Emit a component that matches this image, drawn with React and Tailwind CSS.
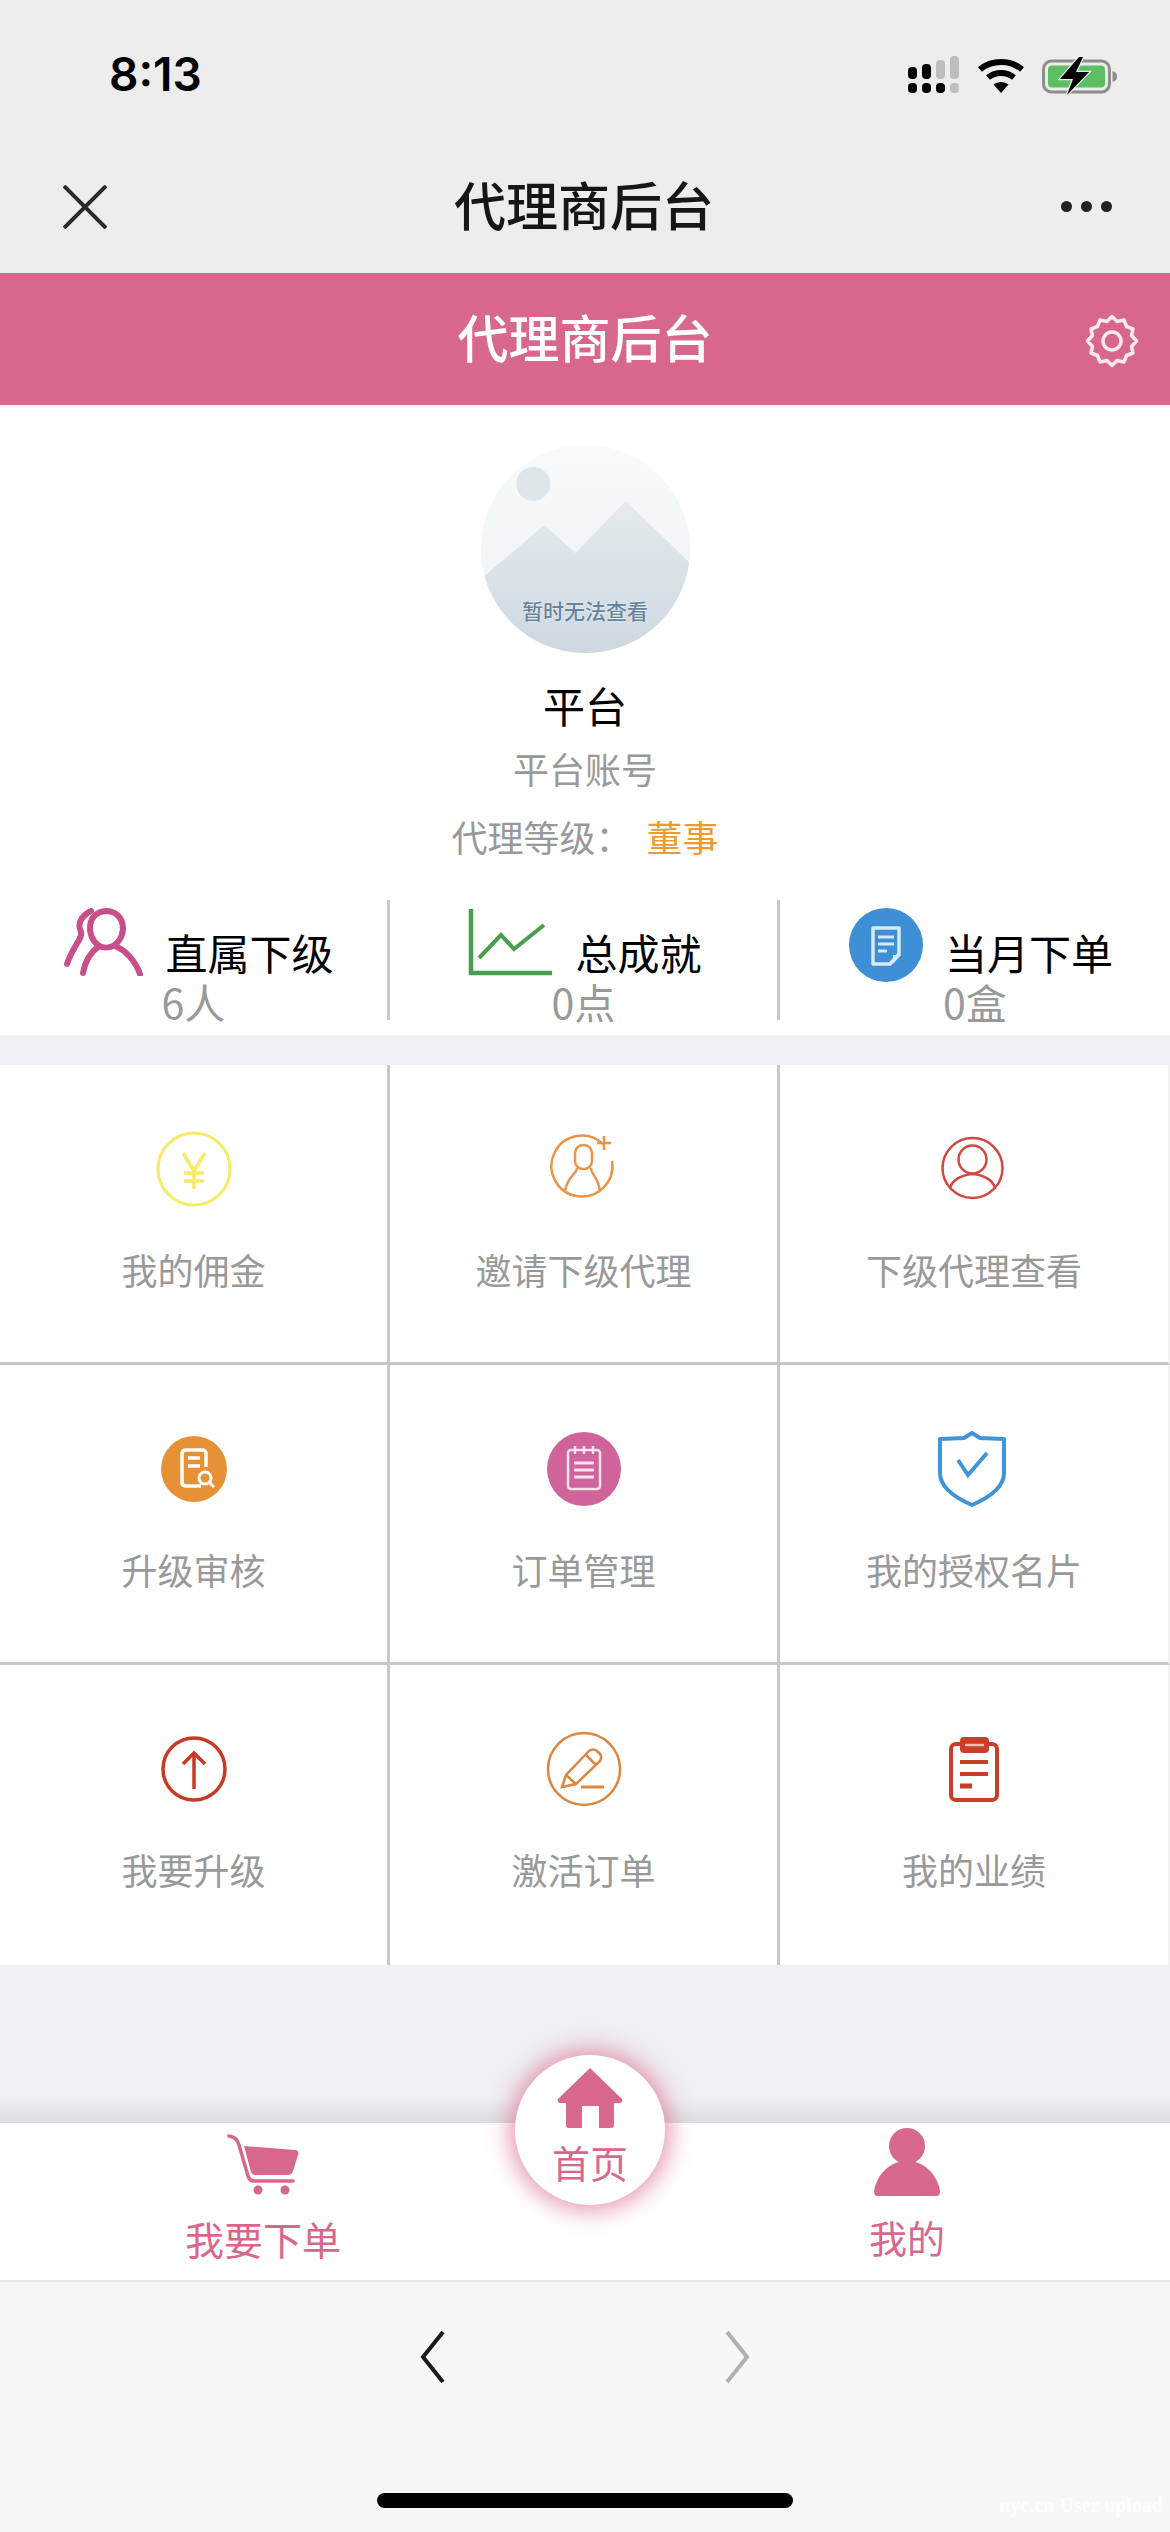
const cjk = "font-['Noto_Sans_CJK_SC','Noto_Sans',sans-serif]";

function Signal() {
  return (
    <svg width="52" height="38" viewBox="0 0 52 38">
      <rect x="0" y="11" width="9" height="12" rx="4" fill="#000" />
      <rect x="14" y="8" width="9" height="15" rx="4" fill="#000" />
      <rect x="28" y="4" width="9" height="19" rx="4" fill="#bdbdbd" />
      <rect x="42" y="0" width="9" height="23" rx="4" fill="#bdbdbd" />
      <rect x="0" y="27" width="9" height="10" rx="4" fill="#000" />
      <rect x="14" y="27" width="9" height="10" rx="4" fill="#000" />
      <rect x="28" y="27" width="9" height="10" rx="4" fill="#000" />
      <rect x="42" y="27" width="9" height="10" rx="4" fill="#bdbdbd" />
    </svg>
  );
}

function Wifi() {
  return (
    <svg width="48" height="38" viewBox="0 0 48 38">
      <path d="M3 13.5C14.5 3.5 33.5 3.5 45 13.5" fill="none" stroke="#000" strokeWidth="6" />
      <path d="M11 21.5C18.5 15.5 29.5 15.5 37 21.5" fill="none" stroke="#000" strokeWidth="6" />
      <path d="M16.5 28.5C21 25 27 25 31.5 28.5L24 37Z" fill="#000" />
    </svg>
  );
}

function Battery() {
  return (
    <svg width="76" height="40" viewBox="0 0 76 40">
      <rect x="1.5" y="5" width="66" height="31" rx="8" fill="none" stroke="#8e8e8e" strokeWidth="3" />
      <rect x="6" y="9.5" width="57" height="22" rx="4" fill="#5dbf63" />
      <path d="M70.5 15C74 16 75 18 75 20.5C75 23 74 25 70.5 26Z" fill="#8e8e8e" />
      <path d="M37 1L18 23H31L25 39L47 16H34L41 1Z" fill="#000" stroke="#ededed" strokeWidth="2.5" paintOrder="stroke" />
    </svg>
  );
}

function Gear() {
  return (
    <svg width="54" height="54" viewBox="0 0 54 54" fill="none" stroke="#fff" strokeOpacity="0.85" strokeWidth="3.5" strokeLinejoin="round">
      <path d="M27 2.5L32 7.5L39 6L41.5 12.5L48 15L46.5 21.5L51.5 27L46.5 32.5L48 39L41.5 41.5L39 48L32 46.5L27 51.5L22 46.5L15 48L12.5 41.5L6 39L7.5 32.5L2.5 27L7.5 21.5L6 15L12.5 12.5L15 6L22 7.5Z" />
      <circle cx="27" cy="27" r="9" />
    </svg>
  );
}

function Avatar() {
  return (
    <div className="relative w-[209px] h-[208px] rounded-full overflow-hidden">
      <svg width="209" height="208" viewBox="0 0 208 208" preserveAspectRatio="none">
        <defs>
          <linearGradient id="sky" x1="0" y1="0" x2="0" y2="1">
            <stop offset="0" stopColor="#f8fafb" />
            <stop offset="1" stopColor="#edf2f5" />
          </linearGradient>
          <linearGradient id="mt" x1="0" y1="0" x2="0" y2="1">
            <stop offset="0" stopColor="#e5ebee" />
            <stop offset="1" stopColor="#cdd8df" />
          </linearGradient>
        </defs>
        <rect width="208" height="208" fill="url(#sky)" />
        <circle cx="52" cy="39" r="17" fill="#dfe6ea" />
        <path d="M0 134L63 80L94 108L144 56L208 118V208H0Z" fill="url(#mt)" />
      </svg>
      <div className="absolute left-0 right-0 top-[153px] text-center text-[21px] leading-[24px] font-medium text-[#64849f] [text-shadow:0_0_2px_#fff]">暂时无法查看</div>
    </div>
  );
}

function PeopleIcon() {
  return (
    <svg width="80" height="68" viewBox="0 0 80 68" fill="none" stroke="#c94f8a" strokeWidth="6" strokeLinecap="round" className="shrink-0">
      <path d="M28 3C18 8 14 16 18 24C20 30 10 38 4 56" />
      <path d="M36 38C22 28 24 4 43 3C62 3 66 28 50 38C46 40 40 40 36 38" />
      <path d="M36 38C28 44 22 52 20 65" />
      <path d="M52 38C62 42 72 52 77 66" />
    </svg>
  );
}

function ChartIcon() {
  return (
    <svg width="85" height="68" viewBox="0 0 85 68" fill="none" stroke="#4a9e50" className="shrink-0">
      <path d="M3 1V65H84" strokeWidth="4.5" />
      <path d="M11 50L33 27L46 41L76 17" strokeWidth="4" />
    </svg>
  );
}

function DocCircleIcon() {
  return (
    <svg width="74" height="74" viewBox="0 0 74 74" fill="none" className="shrink-0">
      <circle cx="37" cy="37" r="37" fill="#3f8fd6" />
      <path d="M24 20H50V46L41 56H24Z" stroke="#d8e9f8" strokeWidth="3.5" strokeLinejoin="round" />
      <path d="M29 29H45M29 36H45M29 43H38" stroke="#d8e9f8" strokeWidth="3" />
      <path d="M44 47H52L44 56Z" fill="#d8e9f8" />
    </svg>
  );
}

function Yen() {
  return (
    <svg width="76" height="76" viewBox="0 0 76 76" fill="none" stroke="#f5ec63">
      <circle cx="38" cy="38" r="36" strokeWidth="3" />
      <path d="M27 22L38 40L49 22M38 40V58M28 42H48M28 50H48" strokeWidth="3.5" />
    </svg>
  );
}

function InviteUser() {
  return (
    <svg width="76" height="76" viewBox="0 0 76 76" fill="none" stroke="#e8954a" strokeWidth="2.5">
      <path d="M57 13A30.5 30.5 0 1 0 66 30" />
      <rect x="29" y="14" width="17" height="24" rx="8" />
      <path d="M31 37C31 43 22 44 19 60M45 37C45 43 51 44 54 60" />
      <path d="M58 5V19M51 12H65" />
    </svg>
  );
}

function UserCircle() {
  return (
    <svg width="76" height="76" viewBox="0 0 76 76" fill="none" stroke="#cf4a40" strokeWidth="2.5">
      <circle cx="36.5" cy="37" r="30" />
      <circle cx="36.5" cy="28.5" r="14" />
      <path d="M36.5 43C24 44 15 50 14 58M36.5 43C49 44 58 50 59 58" />
    </svg>
  );
}

function ReviewCircle() {
  return (
    <svg width="76" height="76" viewBox="0 0 76 76" fill="none">
      <circle cx="38" cy="38" r="33" fill="#e79137" />
      <path d="M45 55H30C27 55 26 53 26 51V23C26 20 28 19 30 19H47C49 19 50 21 50 23V36" stroke="#fff" strokeWidth="3.5" />
      <path d="M32 27H44M32 35H44" stroke="#fff" strokeWidth="3.5" />
      <circle cx="49" cy="47" r="6" stroke="#fff" strokeWidth="3" />
      <path d="M53 51L58 56" stroke="#fff" strokeWidth="3" />
    </svg>
  );
}

function OrderCircle() {
  return (
    <svg width="76" height="76" viewBox="0 0 76 76" fill="none">
      <circle cx="38" cy="38" r="37" fill="#d0639a" />
      <rect x="22" y="19" width="32" height="39" rx="3" stroke="#f9e4ef" strokeWidth="2.5" />
      <path d="M29 15V23M38 15V23M47 15V23" stroke="#f9e4ef" strokeWidth="2.5" />
      <path d="M28 32H48M28 39H48M28 46H48" stroke="#f9e4ef" strokeWidth="3" />
    </svg>
  );
}

function Shield() {
  return (
    <svg width="76" height="76" viewBox="0 0 76 76" fill="none" stroke="#3f95d8">
      <path d="M36 2L44 7L68 8V42C68 58 50 68 36 74C22 68 4 58 4 42V8L28 7Z" strokeWidth="4" strokeLinejoin="round" />
      <path d="M22 29L32 44L51 22" strokeWidth="4" />
    </svg>
  );
}

function ArrowUp() {
  return (
    <svg width="76" height="76" viewBox="0 0 76 76" fill="none" stroke="#c73a25">
      <circle cx="38" cy="38" r="31" strokeWidth="3.5" />
      <path d="M38 58V23M27 33L38 22L49 33" strokeWidth="3.5" />
    </svg>
  );
}

function PencilCircle() {
  return (
    <svg width="76" height="76" viewBox="0 0 76 76" fill="none" stroke="#dd8641" strokeWidth="2.5">
      <circle cx="38" cy="38" r="36" />
      <path d="M16 56L20 44L43 20C45 18 49 18 51 20L54 23C56 25 55 28 54 30L30 53L16 56Z" />
      <path d="M20 44L30 53M40 24L50 34" />
      <path d="M35 56H58" strokeWidth="3" />
    </svg>
  );
}

function Clip() {
  return (
    <svg width="76" height="76" viewBox="0 0 76 76" fill="none" stroke="#c73e29">
      <rect x="15" y="13" width="46" height="56" rx="5" strokeWidth="4" />
      <rect x="25" y="7" width="27" height="14" rx="3" fill="#c73e29" strokeWidth="2" />
      <path d="M29 14H48" stroke="#f3bdb2" strokeWidth="2.5" />
      <path d="M24 31H52M24 43H52" strokeWidth="4" />
      <path d="M24 55H36" strokeWidth="5" />
    </svg>
  );
}

function House() {
  return (
    <svg width="66" height="60" viewBox="0 0 66 60" fill="#d8678c">
      <path d="M33 0L65 31C66 33 65 35 62 35H57V57C57 59 56 60 54 60H42V38H25V60H12C10 60 9 59 9 57V35H4C1 35 0 33 1 31Z" />
    </svg>
  );
}

function Cart() {
  return (
    <svg width="72" height="64" viewBox="0 0 72 64" fill="none">
      <path d="M2 3C8 4 10 6 12 12L21 43C22 47 25 48 28 48H66" stroke="#d8678c" strokeWidth="3.5" strokeLinecap="round" />
      <path d="M17 13L68 17C71 17 72 19 71 22L66 38C65 41 63 42 60 42H28C26 42 25 41 24 39Z" fill="#d8678c" />
      <circle cx="31" cy="57" r="4.5" fill="#d8678c" />
      <circle cx="58" cy="57" r="4.5" fill="#d8678c" />
    </svg>
  );
}

function Person() {
  return (
    <svg width="66" height="68" viewBox="0 0 66 68" fill="#d8678c">
      <circle cx="33" cy="18" r="18" />
      <path d="M33 33C16 33 3 46 0 63C0 66 1 68 4 68H62C65 68 66 66 66 63C63 46 50 33 33 33Z" />
    </svg>
  );
}

const stats = [
  { icon: <PeopleIcon />, title: '直属下级', value: '6人', row: 'pl-[10px]' },
  { icon: <ChartIcon />, title: '总成就', value: '0点', row: 'pl-[3px]' },
  { icon: <DocCircleIcon />, title: '当月下单', value: '0盒', row: 'pl-[12px]' },
];

const menu = [
  { icon: <Yen />, label: '我的佣金' },
  { icon: <InviteUser />, label: '邀请下级代理' },
  { icon: <UserCircle />, label: '下级代理查看' },
  { icon: <ReviewCircle />, label: '升级审核' },
  { icon: <OrderCircle />, label: '订单管理' },
  { icon: <Shield />, label: '我的授权名片' },
  { icon: <ArrowUp />, label: '我要升级' },
  { icon: <PencilCircle />, label: '激活订单' },
  { icon: <Clip />, label: '我的业绩' },
];

export default function App() {
  return (
    <div className={`relative w-[1170px] h-[2532px] overflow-hidden bg-[#efeff4] ${cjk}`}>
      {/* system status + nav */}
      <div className="h-[273px] bg-[#ededed]">
        <div className="h-[150px] flex items-start justify-between pl-[109px] pr-[52px] pt-[46px]">
          <div className="font-['Inter',sans-serif] font-semibold text-[46px] leading-[56px] text-black">8:13</div>
          <div className="flex items-start gap-[17px] pt-[10px]">
            <Signal />
            <Wifi />
            <Battery />
          </div>
        </div>
        <div className="h-[123px] flex items-start justify-between pl-[63px] pr-[58px]">
          <svg width="44" height="44" viewBox="0 0 44 44" className="mt-[35px]" stroke="#2a2a2a" strokeWidth="4">
            <path d="M1 1L43 43M43 1L1 43" />
          </svg>
          <div className="text-[52px] leading-[70px] mt-[19px] font-medium text-[#161616]">代理商后台</div>
          <div className="flex gap-[9px] mt-[51px]">
            <span className="w-[11px] h-[11px] rounded-full bg-[#222]" />
            <span className="w-[11px] h-[11px] rounded-full bg-[#222]" />
            <span className="w-[11px] h-[11px] rounded-full bg-[#222]" />
          </div>
        </div>
      </div>

      {/* app header */}
      <div className="relative h-[132px] bg-[#d8678c] flex items-center justify-center">
        <div className="text-[51px] leading-[70px] mb-[6px] font-medium text-white">代理商后台</div>
        <div className="absolute right-[31px] top-[41px]"><Gear /></div>
      </div>

      {/* profile */}
      <div className="h-[630px] bg-white flex flex-col items-center pt-[40px]">
        <Avatar />
        <div className="mt-[22px] text-[42px] leading-[60px] text-black">平台</div>
        <div className="mt-[8px] text-[36px] leading-[50px] text-[#999]">平台账号</div>
        <div className="mt-[18px] text-[36px] leading-[50px] text-[#999] flex">
          <span>代理等级：</span>
          <span className="ml-[15px] text-[#ec9b2f]">董事</span>
        </div>
        <div className="mt-[39px] w-full grid grid-cols-3 h-[120px]">
          {stats.map((s, i) => (
            <div key={s.title} className={`h-[120px] flex flex-col items-center ${i < 2 ? 'border-r-[3px] border-[#c8c8c8]' : ''}`}>
              <div className={`flex items-start gap-[22px] h-[84px] pt-[8px] ${s.row}`}>
                {s.icon}
                <span className="text-[42px] leading-[60px] mt-[14px] text-black whitespace-nowrap">{s.title}</span>
              </div>
              <div className="text-[41px] leading-[38px] -mt-[2px] text-[#999]">{s.value}</div>
            </div>
          ))}
        </div>
      </div>

      {/* menu grid */}
      <div className="mt-[30px] grid grid-cols-3 bg-white">
        {menu.map((m, i) => (
          <div
            key={m.label}
            className={`h-[300px] flex flex-col items-center pt-[66px] border-[#c8c8c8] ${i % 3 < 2 ? 'border-r-[3px]' : 'border-r-[2px] border-r-[#f2f2f2]'} ${i < 6 ? 'border-b-[3px]' : ''}`}
          >
            <div className="w-[76px] h-[76px]">{m.icon}</div>
            <div className="mt-[37px] text-[36px] leading-[50px] text-[#999] whitespace-nowrap">{m.label}</div>
          </div>
        ))}
      </div>

      {/* shadow above the tab bar */}
      <div className="h-[158px] bg-[linear-gradient(to_bottom,#efeff4_0,#efeff4_84%,#dcdce0_100%)]" />

      {/* tab bar */}
      <div className="h-[159px] bg-white border-b-[2px] border-[#e8e8e8] grid grid-cols-[526px_128px_516px]">
        <div className="flex flex-col items-center pt-[10px]">
          <Cart />
          <div className="mt-[14px] text-[39px] leading-[54px] text-[#d8678c]">我要下单</div>
        </div>
        <div />
        <div className="flex flex-col items-center pt-[5px] pr-[10px]">
          <Person />
          <div className="mt-[14px] text-[38px] leading-[54px] text-[#d8678c]">我的</div>
        </div>
      </div>

      {/* home button sitting over the tab bar */}
      <div className="absolute left-[515px] top-[2055px] w-[150px] h-[150px] rounded-full bg-white shadow-[0_0_22px_6px_rgba(216,103,140,0.65)] flex flex-col items-center pt-[13px]">
        <House />
        <div className="text-[38px] leading-[50px] mt-[9px] text-[#d8678c]">首页</div>
      </div>

      {/* browser toolbar */}
      <div className="relative h-[250px] bg-[#f7f7f7]">
        <div className="flex justify-center gap-[280px] pt-[48px]">
          <svg width="25" height="54" viewBox="0 0 25 54" fill="none" stroke="#1a1a1a" strokeWidth="4">
            <path d="M23 2L3 27L23 52" />
          </svg>
          <svg width="25" height="54" viewBox="0 0 25 54" fill="none" stroke="#b0b0b0" strokeWidth="4">
            <path d="M2 2L22 27L2 52" />
          </svg>
        </div>
        <div className="mt-[109px] mx-auto w-[416px] h-[15px] rounded-full bg-black" />
        <div className="absolute right-[7px] bottom-[16px] text-[20px] leading-[22px] font-bold text-white/90 font-['Liberation_Serif',serif]">nyc.cn User upload</div>
      </div>
    </div>
  );
}
